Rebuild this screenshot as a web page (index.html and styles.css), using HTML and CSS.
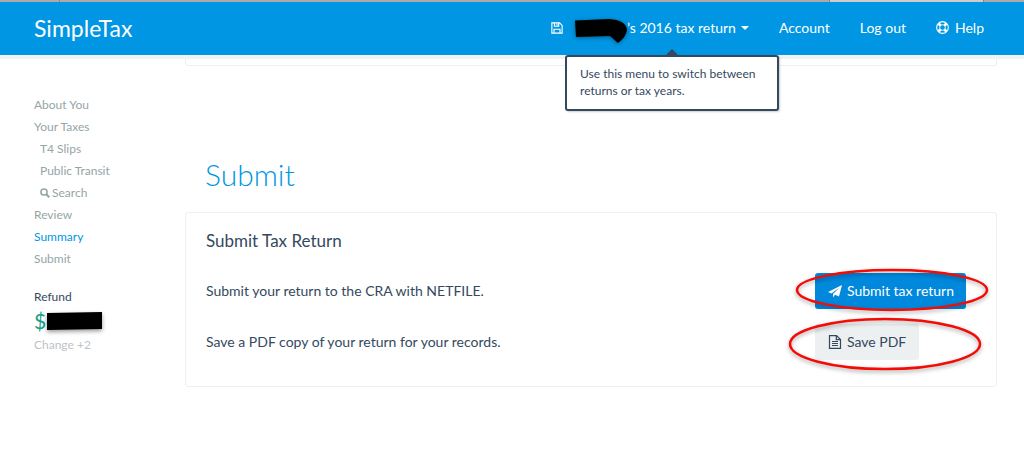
FILE: index.html
```html
<!DOCTYPE html>
<html lang="en">
<head>
<meta charset="utf-8">
<meta name="viewport" content="width=device-width, initial-scale=1">
<title>SimpleTax</title>
<link rel="stylesheet" href="styles.css">
</head>
<body>
<div class="tabstrip"><span class="tab"></span><span class="tab tab-wide"></span><span class="tab tab-light"></span><span class="tab tab-end"></span></div>
<header class="topbar">
  <a class="brand" href="#">SimpleTax</a>
  <nav class="topnav">
    <div class="switcher">
      <button class="nav-button" type="button" aria-label="Save">
        <svg class="save-icon" viewBox="0 0 14 14" fill="none" stroke="currentColor" stroke-width="1.3"><path d="M1 1h9l3 3v9H1zM4 1v4h5V1M3.500 13V8.500h7V13M7 2v2"/></svg>
      </button>
      <button class="nav-button" type="button">
        <svg class="redacted-name" viewBox="0 0 52 24"><path d="M0 1.500L34 0Q51 1 52 11Q51 18 43 24L35 17L1 18Z"/></svg><span>’s 2016 tax return</span><span class="caret"></span>
      </button>
      <div class="tooltip" role="tooltip">Use this menu to switch between returns or tax years.</div>
    </div>
    <a href="#">Account</a>
    <a href="#">Log out</a>
    <a class="help" href="#">
      <svg class="help-icon" viewBox="0 0 14 14" fill="none" stroke="currentColor"><circle cx="7" cy="7" r="6.300" stroke-width="1.200"/><circle cx="7" cy="7" r="3"/><path stroke-width="3" d="M2.900 2.900l2 2M11.100 2.900l-2 2M2.900 11.100l2-2M11.100 11.100l-2-2"/></svg>
      Help
    </a>
  </nav>
</header>
<div class="page">
  <aside class="sidebar">
    <nav class="steps">
      <a href="#">About You</a>
      <a href="#">Your Taxes</a>
      <a class="sub" href="#">T4 Slips</a>
      <a class="sub" href="#">Public Transit</a>
      <a class="sub" href="#"><svg class="search-icon" viewBox="0 0 10 10" fill="none" stroke="currentColor" stroke-width="1.500"><circle cx="4" cy="4" r="3.100"/><path d="M6.200 6.200L9.300 9.300" stroke-width="2"/></svg>Search</a>
      <a href="#">Review</a>
      <a class="current" href="#">Summary</a>
      <a href="#">Submit</a>
    </nav>
    <div class="refund">
      <div class="refund-label">Refund</div>
      <div class="refund-amount">$<svg class="redacted-amount" viewBox="0 0 55 18"><path d="M0 1L55 0V17L0 18Z"/></svg></div>
      <div class="refund-change">Change +2</div>
    </div>
  </aside>
  <main class="content">
    <div class="card card-previous"></div>
    <h1>Submit</h1>
    <section class="card">
      <h2>Submit Tax Return</h2>
      <div class="row">
        <p>Submit your return to the CRA with NETFILE.</p>
        <div class="action">
          <button class="button primary" type="button"><svg class="button-icon" viewBox="0 0 14 14" fill="currentColor"><path d="M14 1L0 8l3.500 1.400L11.500 3.500 5 10v3.500l2-2.700 4 1.700z"/></svg>Submit tax return</button>
          <svg class="ring ring-submit" viewBox="0 0 194 44"><ellipse cx="97" cy="22" rx="95" ry="20"/></svg>
        </div>
      </div>
      <div class="row">
        <p>Save a PDF copy of your return for your records.</p>
        <div class="action">
          <button class="button" type="button"><svg class="button-icon" viewBox="0 0 14 14" fill="none" stroke="currentColor" stroke-width="1.200"><path d="M1.500.6H8.500L12.500 4.500V13.400H1.500zM8.300.8V4.700H12.300M4 6.500h6M4 8.500h6M4 10.500h6"/></svg>Save PDF</button>
          <svg class="ring ring-pdf" viewBox="0 0 194 54"><ellipse cx="97" cy="27" rx="95" ry="25"/></svg>
        </div>
      </div>
    </section>
  </main>
</div>
</body>
</html>
```
FILE: styles.css
```css
* {
  box-sizing: border-box;
}

body {
  margin: 0;
  background: #fff;
  color: #34495e;
  font-family: Lato, "Liberation Sans", sans-serif;
  font-size: 14px;
  line-height: 20px;
}

a {
  color: inherit;
  text-decoration: none;
}

button {
  font: inherit;
  color: inherit;
  border: 0;
  background: none;
  padding: 0;
  cursor: pointer;
}

h1, h2, p {
  margin: 0;
  font-weight: 400;
}

svg {
  flex: none;
  overflow: visible;
}

.tabstrip {
  display: flex;
  height: 2px;
  background: #aaa;
}

.tab {
  width: 60px;
  border-right: 1px solid #888;
}

.tab-wide {
  flex: 1;
}

.tab-light {
  width: 154px;
  background: #ccc;
}

.tab-end {
  width: 40px;
  border: 0;
}

.topbar {
  position: relative;
  z-index: 1;
  display: flex;
  align-items: center;
  justify-content: space-between;
  height: 53px;
  padding: 0 40px 2px 34px;
  background: #0096e3;
  color: #fff;
  box-shadow: 0 4px 0 #f1f2f3;
}

.brand {
  font-size: 23px;
}

.topnav,
.switcher,
.nav-button,
.help {
  display: flex;
  align-items: center;
}

.topnav {
  gap: 30px;
}

.switcher {
  position: relative;
  gap: 12px;
}

.save-icon {
  width: 12px;
  height: 12px;
}

.redacted-name {
  width: 52px;
  height: 24px;
  margin-top: 6px;
  fill: #000;
  filter: drop-shadow(0 1px 2px rgba(0, 0, 0, 0.4));
}

.caret {
  margin-left: 5px;
  border: 4px solid transparent;
  border-top-color: #fff;
  border-bottom: 0;
}

.help {
  gap: 6px;
}

.help-icon {
  width: 13px;
  height: 13px;
}

.tooltip {
  position: absolute;
  top: 42px;
  left: 14px;
  width: 214px;
  padding: 8px 13px 10px;
  border: 2px solid #34495e;
  border-radius: 3px;
  background: #fff;
  color: #34495e;
  font-size: 12px;
  line-height: 17px;
  box-shadow: 1px 1px 2px rgba(0, 0, 0, 0.2);
}

.tooltip::before {
  content: "";
  position: absolute;
  bottom: 100%;
  left: 50%;
  margin-left: -8px;
  border: 8px solid transparent;
  border-top: 0;
  border-bottom-color: #34495e;
}

.page {
  display: flex;
  padding: 0 27px 0 34px;
}

.sidebar {
  width: 151px;
  padding-top: 39px;
  color: #95a5a6;
  font-size: 12px;
  line-height: 22px;
}

.steps {
  display: flex;
  flex-direction: column;
}

.sub {
  display: flex;
  align-items: center;
  gap: 2px;
  padding-left: 6px;
}

.search-icon {
  width: 10px;
  height: 10px;
}

.current {
  color: #0096e3;
}

.refund {
  padding-top: 16px;
}

.refund-label {
  color: #34495e;
}

.refund-amount {
  display: flex;
  align-items: center;
  gap: 1px;
  height: 26px;
  color: #16a085;
  font-size: 21px;
}

.redacted-amount {
  width: 55px;
  height: 18px;
  fill: #000;
  filter: drop-shadow(0 2px 2px rgba(0, 0, 0, 0.4));
}

.refund-change {
  color: #bdc3c7;
}

.content {
  flex: 1;
}

.card {
  padding: 18px 30px 26px 20px;
  border: 1px solid #ecf0f1;
  border-radius: 3px;
}

.card-previous {
  height: 11px;
  padding: 0;
  border-top: 0;
}

h1 {
  padding: 88px 0 18px 20px;
  color: #0096e3;
  font-size: 30px;
  line-height: 40px;
  font-weight: 300;
}

h2 {
  font-size: 17px;
}

.row {
  display: grid;
  grid-template-columns: 1fr 151px;
  align-items: center;
  margin-top: 15px;
}

h2 + .row {
  margin-top: 22px;
}

.action {
  position: relative;
  display: flex;
}

.button {
  display: flex;
  align-items: center;
  gap: 5px;
  height: 36px;
  padding: 0 13px;
  border-radius: 3px;
  background: #ecf0f1;
  white-space: nowrap;
}

.primary {
  width: 100%;
  background: #0088dd;
  color: #fff;
}

.button-icon {
  width: 14px;
  height: 14px;
}

.ring {
  position: absolute;
  width: 194px;
  fill: none;
  stroke: #f40b05;
  stroke-width: 2.5px;
  filter: drop-shadow(0 2px 2px rgba(0, 0, 0, 0.35));
  pointer-events: none;
}

.ring-submit {
  top: -5px;
  left: -20px;
  height: 44px;
}

.ring-pdf {
  top: -7px;
  left: -27px;
  height: 54px;
}
```
